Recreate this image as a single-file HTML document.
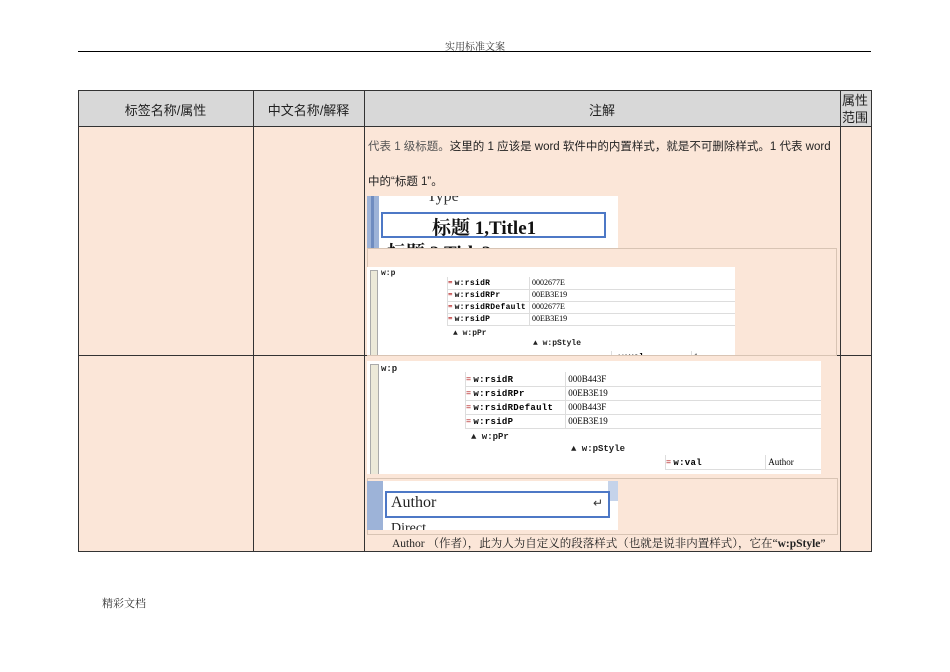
<!DOCTYPE html><html><head><meta charset="utf-8"><style>
body{margin:0;width:950px;height:672px;background:#fff;position:relative;font-family:"Liberation Serif","Noto Serif CJK SC",serif;overflow:hidden}
.a{position:absolute}
.t{font-family:"Liberation Sans","Noto Sans CJK SC",sans-serif}
.mono{font-family:"Liberation Mono",monospace;font-size:8px;font-weight:bold;color:#222}
.cell{position:absolute;border-bottom:1px solid #ddd;border-left:1px solid #ddd;height:12px;line-height:12px;font-size:8px;font-family:"Liberation Serif",serif;white-space:nowrap;overflow:hidden}
.cell b{font-family:"Liberation Mono",monospace;letter-spacing:0.3px}
.eq{color:#a00;font-weight:bold}
</style></head><body>
<div class="a" style="left:0;top:38px;width:950px;text-align:center;font-size:10px;color:#333">实用标准文案</div>
<div class="a" style="left:78px;top:51px;width:793px;height:1px;background:#000"></div>
<!-- table -->
<div class="a" style="left:78px;top:90px;width:792px;height:460px;border:1px solid #333;background:#fbe6d8"></div>
<div class="a" style="left:79px;top:91px;width:792px;height:35px;background:#d8d8d8;border-bottom:1px solid #333"></div>
<div class="a" style="left:253px;top:90px;width:1px;height:461px;background:#333"></div>
<div class="a" style="left:364px;top:90px;width:1px;height:461px;background:#333"></div>
<div class="a" style="left:840px;top:90px;width:1px;height:461px;background:#333"></div>
<div class="a" style="left:78px;top:355px;width:793px;height:1px;background:#333"></div>
<div class="a t" style="left:78px;top:100px;width:175px;text-align:center;font-size:13px;color:#222">标签名称/属性</div>
<div class="a t" style="left:253px;top:100px;width:111px;text-align:center;font-size:13px;color:#222">中文名称/解释</div>
<div class="a t" style="left:364px;top:100px;width:476px;text-align:center;font-size:13px;color:#222">注解</div>
<div class="a t" style="left:842px;top:92px;width:28px;font-size:13px;line-height:17px;color:#222">属性范围</div>
<!-- row1 text -->
<div class="a t" style="left:368px;top:138px;font-size:11.5px;color:#222;white-space:nowrap"><span style="color:#555">代表 1 级标题。</span>这里的 1 应该是 word 软件中的内置样式，就是不可删除样式。1 代表 word</div>
<div class="a t" style="left:368px;top:173px;font-size:11.5px;color:#222">中的“标题 1”。</div>
<!-- word shot 1 -->
<div class="a" style="left:367px;top:196px;width:251px;height:52px;background:#fff;overflow:hidden">
<div class="a" style="left:0;top:0;width:12px;height:52px;background:#9db3d8"></div>
<div class="a" style="left:4px;top:0;width:3px;height:52px;background:#6f8cc0"></div>
<div class="a" style="left:60px;top:-8px;font-size:16px;color:#333">Type</div>
<div class="a" style="left:14px;top:16px;width:221px;height:22px;border:2px solid #4d78c6"></div>
<div class="a" style="left:65px;top:17px;font-size:19px;font-weight:bold;color:#111">标题 1,Title1</div>
<div class="a" style="left:20px;top:42px;font-size:19px;font-weight:bold;color:#111">标题 2,Title2</div>
</div>
<div class="a" style="left:367px;top:248px;width:468px;height:106px;border:1px solid #d8c4b4"></div>
<div class="a" style="left:367px;top:267px;width:368px;height:88px;background:#fff;overflow:hidden">
<div class="a" style="left:3px;top:3px;width:6px;height:85px;background:#ece9d8;border:1px solid #aaa"></div>
<div class="a mono" style="left:14px;top:2px">w:p</div>
<div class="a" style="left:80px;top:10px;width:288px;height:80px">
<div class="cell" style="left:0;top:0;width:82px"><span class="eq">=</span> <b>w:rsidR</b></div><div class="cell" style="left:82px;top:0;width:206px">&nbsp;0002677E</div>
<div class="cell" style="left:0;top:12px;width:82px"><span class="eq">=</span> <b>w:rsidRPr</b></div><div class="cell" style="left:82px;top:12px;width:206px">&nbsp;00EB3E19</div>
<div class="cell" style="left:0;top:24px;width:82px"><span class="eq">=</span> <b>w:rsidRDefault</b></div><div class="cell" style="left:82px;top:24px;width:206px">&nbsp;0002677E</div>
<div class="cell" style="left:0;top:36px;width:82px"><span class="eq">=</span> <b>w:rsidP</b></div><div class="cell" style="left:82px;top:36px;width:206px">&nbsp;00EB3E19</div>
<div class="a mono" style="left:6px;top:52px">▲ w:pPr</div>
<div class="a mono" style="left:86px;top:62px">▲ w:pStyle</div>
<div class="cell" style="left:164px;top:74px;width:80px"><span class="eq">=</span> <b>w:val</b></div><div class="cell" style="left:244px;top:74px;width:44px">&nbsp;1</div>
</div></div>
<!-- row2 xml -->
<div class="a" style="left:367px;top:361px;width:454px;height:113px;background:#fff;overflow:hidden">
<div class="a" style="left:3px;top:3px;width:7px;height:110px;background:#ece9d8;border:1px solid #aaa"></div>
<div class="a mono" style="left:14px;top:3px;font-size:9px">w:p</div>
<div class="a" style="left:98px;top:11px;width:356px;height:105px">
<div class="cell" style="left:0;top:0;width:100px;height:14px;line-height:14px;font-size:9px"><span class="eq">=</span> <b>w:rsidR</b></div><div class="cell" style="left:100px;top:0;width:256px;height:14px;line-height:14px;font-size:9px">&nbsp;000B443F</div>
<div class="cell" style="left:0;top:14px;width:100px;height:14px;line-height:14px;font-size:9px"><span class="eq">=</span> <b>w:rsidRPr</b></div><div class="cell" style="left:100px;top:14px;width:256px;height:14px;line-height:14px;font-size:9px">&nbsp;00EB3E19</div>
<div class="cell" style="left:0;top:28px;width:100px;height:14px;line-height:14px;font-size:9px"><span class="eq">=</span> <b>w:rsidRDefault</b></div><div class="cell" style="left:100px;top:28px;width:256px;height:14px;line-height:14px;font-size:9px">&nbsp;000B443F</div>
<div class="cell" style="left:0;top:42px;width:100px;height:14px;line-height:14px;font-size:9px"><span class="eq">=</span> <b>w:rsidP</b></div><div class="cell" style="left:100px;top:42px;width:256px;height:14px;line-height:14px;font-size:9px">&nbsp;00EB3E19</div>
<div class="a mono" style="left:6px;top:60px;font-size:9px">▲ w:pPr</div>
<div class="a mono" style="left:106px;top:72px;font-size:9px">▲ w:pStyle</div>
<div class="cell" style="left:200px;top:83px;width:100px;height:14px;line-height:14px;font-size:9px"><span class="eq">=</span> <b>w:val</b></div><div class="cell" style="left:300px;top:83px;width:56px;height:14px;line-height:14px;font-size:9px">&nbsp;Author</div>
</div></div>
<div class="a" style="left:367px;top:478px;width:469px;height:55px;border:1px solid #d8c4b4"></div>
<div class="a" style="left:367px;top:481px;width:251px;height:49px;background:#fff;overflow:hidden">
<div class="a" style="left:0;top:0;width:16px;height:49px;background:#9db3d8"></div>
<div class="a" style="left:241px;top:0;width:10px;height:20px;background:#c5d3ea"></div>
<div class="a" style="left:18px;top:10px;width:221px;height:23px;border:2px solid #4d78c6"></div>
<div class="a" style="left:24px;top:13px;font-size:16px;color:#222">Author</div>
<div class="a" style="left:226px;top:15px;font-size:12px;color:#333">↵</div>
<div class="a" style="left:24px;top:40px;font-size:14px;color:#222">Direct</div>
</div>
<div class="a" style="left:392px;top:535px;font-size:11.5px;color:#222;white-space:nowrap">Author （作者），此为人为自定义的段落样式（也就是说非内置样式），它在“<b>w:pStyle</b>”</div>
<div class="a" style="left:102px;top:595px;font-size:11px;color:#333">精彩文档</div>
</body></html>
